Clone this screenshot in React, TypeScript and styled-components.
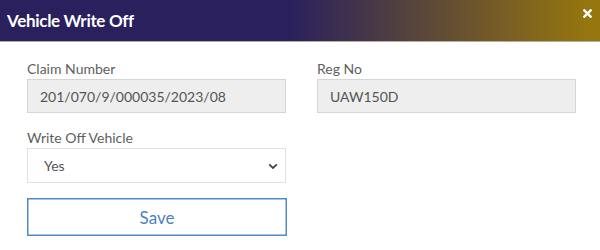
import styled, { createGlobalStyle } from "styled-components";

const GlobalStyle = createGlobalStyle`
  body {
    margin: 0;
    background: #ffffff;
    font-family: Lato, "Liberation Sans", sans-serif;
  }
`;

function App() {
  return (
    <>
      <GlobalStyle />
      <Modal>
        <Header>
          <Title>Vehicle Write Off</Title>
          <Close aria-label="Close">
            <svg width="9" height="9" viewBox="0 0 10 10">
              <path
                d="M1.5 1.5 L8.5 8.5 M8.5 1.5 L1.5 8.5"
                stroke="#ffffff"
                strokeWidth="2.6"
                strokeLinecap="square"
              />
            </svg>
          </Close>
        </Header>
        <Body>
          <Grid>
            <Field>
              <Label>Claim Number</Label>
              <Input readOnly value="201/070/9/000035/2023/08" />
            </Field>
            <Field>
              <Label>Reg No</Label>
              <Input readOnly value="UAW150D" />
            </Field>
            <Field>
              <Label>Write Off Vehicle</Label>
              <SelectWrap>
                <Select defaultValue="yes">
                  <option value="yes">Yes</option>
                  <option value="no">No</option>
                </Select>
                <Chevron width="10" height="7" viewBox="0 0 10 7">
                  <path
                    d="M1.2 1.4 L5 5 L8.8 1.4"
                    fill="none"
                    stroke="#444"
                    strokeWidth="1.8"
                  />
                </Chevron>
              </SelectWrap>
            </Field>
          </Grid>
          <SaveButton type="button">Save</SaveButton>
        </Body>
      </Modal>
    </>
  );
}

const Modal = styled.div`
  width: 600px;
  height: 250px;
  background: #ffffff;
`;

const Header = styled.div`
  width: 585px;
  height: 41px;
  display: flex;
  align-items: center;
  justify-content: space-between;
  padding: 0 8px 0 7px;
  box-sizing: content-box;
  background: linear-gradient(to right, #29205d 48%, #96760e 98%);
  border-bottom: 1px solid #b4aea2;
`;

const Title = styled.h4`
  margin: 0 0 1px;
  color: #ffffff;
  font-size: 17px;
  font-weight: 700;
  letter-spacing: -0.3px;
`;

const Close = styled.span`
  display: flex;
  margin-top: -14px;
`;

const Body = styled.div`
  padding: 18px 24px 0 27px;
`;

const Grid = styled.div`
  display: grid;
  grid-template-columns: 259px 259px;
  column-gap: 31px;
  row-gap: 16px;
`;

const Field = styled.div`
  display: flex;
  flex-direction: column;
`;

const Label = styled.label`
  color: #606060;
  font-size: 14px;
  line-height: 17px;
  margin-bottom: 2px;
`;

const Input = styled.input`
  height: 34px;
  box-sizing: border-box;
  border: 1px solid #d6d6d6;
  background: #eeeeee;
  color: #555555;
  font-family: inherit;
  font-size: 14px;
  padding: 0 12px;
  outline: none;
`;

const SelectWrap = styled.div`
  position: relative;
`;

const Select = styled.select`
  width: 100%;
  height: 35px;
  box-sizing: border-box;
  border: 1px solid #e0e0e6;
  background: #ffffff;
  color: #555555;
  font-family: inherit;
  font-size: 14px;
  padding: 0 16px;
  appearance: none;
  outline: none;
  border-radius: 0;
`;

const Chevron = styled.svg`
  position: absolute;
  right: 8px;
  top: 15px;
  pointer-events: none;
`;

const SaveButton = styled.button`
  display: block;
  margin-top: 15px;
  width: 260px;
  height: 38px;
  box-sizing: border-box;
  border: 1px solid #4f8cc6;
  box-shadow: inset 0 0 0 0.5px #4f8cc6;
  background: #ffffff;
  color: #4a82c0;
  font-family: inherit;
  font-size: 17px;
  cursor: pointer;
`;

export default App;
